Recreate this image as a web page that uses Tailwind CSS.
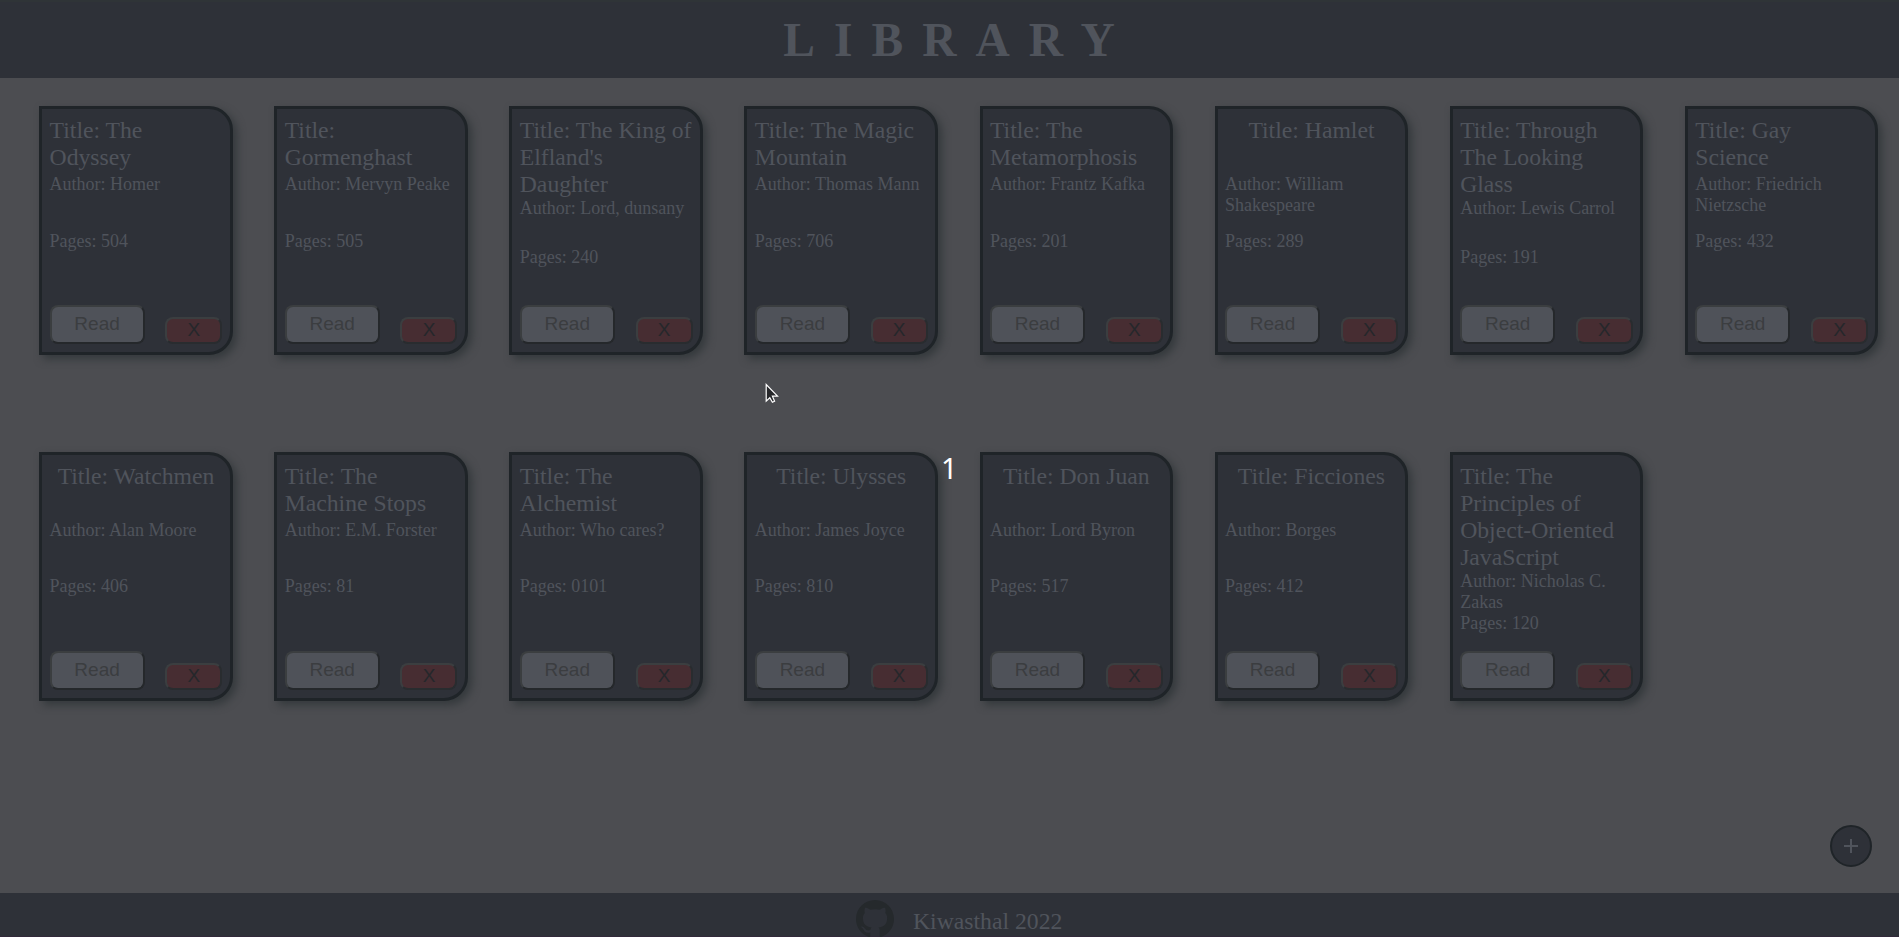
<!DOCTYPE html>
<html lang="en">
<head>
<meta charset="utf-8">
<title>Library</title>
<script src="https://cdn.jsdelivr.net/npm/@tailwindcss/browser@4"></script>
</head>
<body class="relative flex h-[937px] w-[1899px] flex-col overflow-hidden bg-[#4c4d51] font-['Liberation_Serif',serif] text-[#50545c]">
<header class="flex h-[78px] shrink-0 justify-center border-t-2 border-[#2f3437] bg-[#2e3138] pl-[18px]">
  <h1 class="mt-[11px] text-[47.5px] leading-[55px] font-bold tracking-[19px]">LIBRARY</h1>
</header>
<main id="books" class="grid h-[815px] shrink-0 grid-cols-[repeat(8,193.6px)] content-start gap-x-[41.5px] gap-y-[97px] pt-[28px] pl-[39.2px]"></main>
<template id="card">
  <article class="flex h-[249px] flex-col rounded-r-[24px] border-[3px] border-[#1f2428] bg-[#2e3138] px-[7.4px] pt-[8px] pb-[8.5px] shadow-[4px_4px_8px_#34393c]">
    <div class="title flex justify-center text-[23.7px] leading-[27px]"><p class="w-full"></p></div>
    <div class="author text-[18px] leading-[21px]"></div>
    <div class="pages text-[18px] leading-[21px]"></div>
    <div class="mt-auto flex items-end justify-between font-['Liberation_Sans',sans-serif] text-[19px] text-[#3b3d40]">
      <button class="h-[39px] w-[95px] rounded-[8px] border-2 border-t-[#3b3e40] border-r-[#25282b] border-b-[#25282b] border-l-[#3b3e40] bg-[#4f5259]">Read</button>
      <button class="flex h-[27px] w-[57px] items-center justify-center rounded-[8px] border-2 border-t-[#3b3e40] border-r-[#292c2f] border-b-[#292c2f] border-l-[#3b3e40] bg-[#472d32] text-[#25272b]">X</button>
    </div>
  </article>
</template>
<footer class="flex h-[44px] shrink-0 border-b border-[#32293a] bg-[#2e3138] pl-[856px]">
  <svg class="mt-[7px] h-[38px] w-[38px] shrink-0 fill-[#25292c]" viewBox="0 0 16 16"><path d="M8 0C3.58 0 0 3.58 0 8c0 3.54 2.29 6.53 5.47 7.59.4.07.55-.17.55-.38 0-.19-.01-.82-.01-1.49-2.01.37-2.53-.49-2.69-.94-.09-.23-.48-.94-.82-1.13-.28-.15-.68-.52-.01-.53.63-.01 1.08.58 1.23.82.72 1.21 1.87.87 2.33.66.07-.52.28-.87.51-1.07-1.78-.2-3.64-.89-3.64-3.95 0-.87.31-1.59.82-2.15-.08-.2-.36-1.02.08-2.12 0 0 .67-.21 2.2.82a7.6 7.6 0 0 1 4 0c1.53-1.04 2.2-.82 2.2-.82.44 1.1.16 1.92.08 2.12.51.56.82 1.27.82 2.15 0 3.07-1.87 3.75-3.65 3.95.29.25.54.73.54 1.48 0 1.07-.01 1.93-.01 2.2 0 .21.15.46.55.38A8.01 8.01 0 0 0 16 8c0-4.42-3.58-8-8-8z"/></svg>
  <p class="mt-[15px] ml-[19px] text-[23.7px] leading-[27px]">Kiwasthal 2022</p>
</footer>
<button class="absolute top-[825px] left-[1830px] flex h-[42px] w-[42px] items-center justify-center rounded-full border-2 border-[#1f2428] bg-[#2e3138]">
  <svg class="h-[14px] w-[14px]" viewBox="0 0 14 14"><path d="M7 0V14M0 7H14" stroke="#50545c" stroke-width="2"/></svg>
</button>
<div class="absolute top-[450px] left-[941px] font-['Noto_Sans',sans-serif] text-[29px] leading-[36px] text-white">1</div>
<svg class="absolute top-[383px] left-[765px] h-[21px] w-[15px]" viewBox="0 0 15 21"><path d="M1.2 1.5V18.2L4.8 14.7L7.4 19.3L9.6 18.2L7.4 13.2H12.5Z" fill="#26272a" stroke="#fff" stroke-width="1.2"/></svg>
<script>
// [title, author, pages, centred title?]
const books = [
  ["The Odyssey", "Homer", "504"],
  ["Gormenghast", "Mervyn Peake", "505"],
  ["The King of Elfland's Daughter", "Lord, dunsany", "240"],
  ["The Magic Mountain", "Thomas Mann", "706"],
  ["The Metamorphosis", "Frantz Kafka", "201"],
  ["Hamlet", "William Shakespeare", "289", true],
  ["Through The Looking Glass", "Lewis Carrol", "191"],
  ["Gay Science", "Friedrich Nietzsche", "432"],
  ["Watchmen", "Alan Moore", "406", true],
  ["The Machine Stops", "E.M. Forster", "81"],
  ["The Alchemist", "Who cares?", "0101"],
  ["Ulysses", "James Joyce", "810", true],
  ["Don Juan", "Lord Byron", "517", true],
  ["Ficciones", "Borges", "412", true],
  ["The Principles of Object-Oriented JavaScript", "Nicholas C. Zakas", "120"]
];
const tpl = document.getElementById("card");
books.forEach(([title, author, pages, centred], i) => {
  const c = tpl.content.cloneNode(true);
  const t = c.querySelector(".title"), p = t.querySelector("p"), a = c.querySelector(".author");
  p.textContent = "Title: " + title;
  if (centred) p.className = "text-center w-full";
  t.style.minHeight = "57px";
  a.textContent = "Author: " + author;
  // Longer titles leave less room for the author row
  a.style.height = title.length > 40 ? "42px" : title.length > 23 ? "49px" : i < 8 ? "57px" : "56px";
  c.querySelector(".pages").textContent = "Pages: " + pages;
  document.getElementById("books").append(c);
});
</script>
</body>
</html>
